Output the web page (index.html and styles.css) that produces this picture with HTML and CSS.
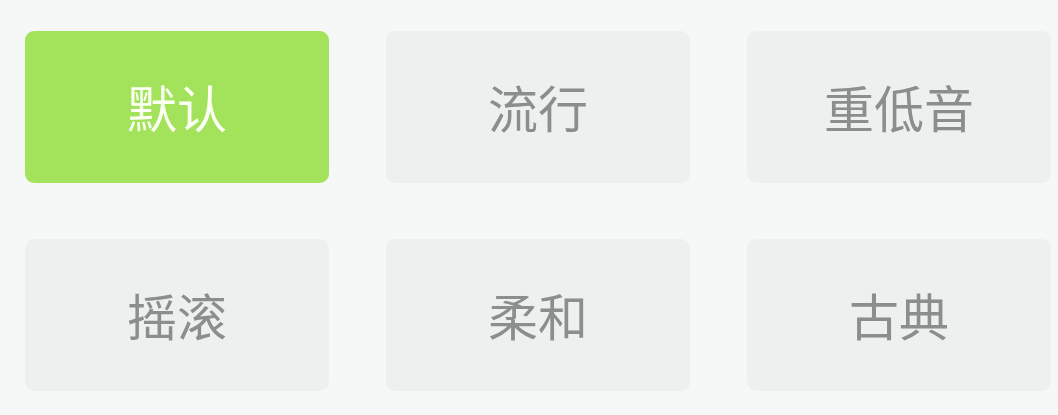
FILE: index.html
```html
<!DOCTYPE html>
<html lang="zh-CN">
<head>
<meta charset="utf-8">
<link rel="stylesheet" href="styles.css">
</head>
<body>
<div class="grid">
  <div class="btn active">默认</div>
  <div class="btn">流行</div>
  <div class="btn">重低音</div>
  <div class="btn">摇滚</div>
  <div class="btn">柔和</div>
  <div class="btn">古典</div>
</div>
</body>
</html>
```
FILE: styles.css
```css
html, body {
  margin: 0;
  padding: 0;
  background: #f6f8f7;
}
body {
  width: 1058px;
  height: 415px;
  overflow: hidden;
  font-family: "Noto Sans CJK SC", "Noto Sans", sans-serif;
}
.grid {
  display: grid;
  grid-template-columns: repeat(3, 304px);
  grid-auto-rows: 152px;
  column-gap: 57px;
  row-gap: 56px;
  padding: 31px 0 0 25px;
}
.btn {
  display: flex;
  align-items: center;
  justify-content: center;
  background: #eef0ef;
  border-radius: 9px;
  color: #8a8f8c;
  font-size: 50px;
  font-weight: 400;
  line-height: 1;
  padding-bottom: 2px;
}
.btn.active {
  background: #a3e35c;
  color: #fbfff4;
}
```
